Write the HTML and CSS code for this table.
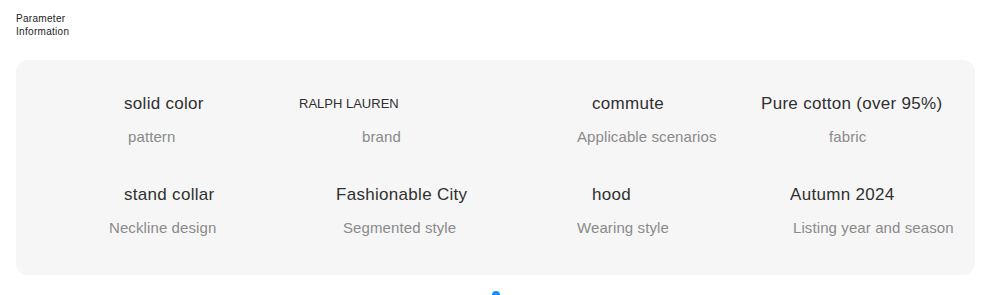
FILE: index.html
```html
<!DOCTYPE html>
<html lang="en">
<head>
<meta charset="utf-8">
<title>Parameter Information</title>
<link rel="stylesheet" href="styles.css">
</head>
<body>
  <div class="page">
    <h2 class="title">Parameter<br>Information</h2>
    <section class="card">
      <div class="grid">
        <div class="cell">
          <div class="value off-15">solid color</div>
          <div class="label off-19">pattern</div>
        </div>
        <div class="cell">
          <div class="value brand-value">RALPH LAUREN</div>
          <div class="label off-63">brand</div>
        </div>
        <div class="cell">
          <div class="value off-15">commute</div>
          <div class="label">Applicable scenarios</div>
        </div>
        <div class="cell">
          <div class="value">Pure cotton (over 95%)</div>
          <div class="label off-68">fabric</div>
        </div>

        <div class="cell">
          <div class="value off-15">stand collar</div>
          <div class="label">Neckline design</div>
        </div>
        <div class="cell">
          <div class="value off-37">Fashionable City</div>
          <div class="label off-44">Segmented style</div>
        </div>
        <div class="cell">
          <div class="value off-15">hood</div>
          <div class="label">Wearing style</div>
        </div>
        <div class="cell">
          <div class="value off-29">Autumn 2024</div>
          <div class="label off-32">Listing year and season</div>
        </div>
      </div>
    </section>
    <div class="dots"><span class="dot"></span></div>
  </div>
</body>
</html>
```

FILE: styles.css
```css
* { box-sizing: border-box; }
html, body {
  margin: 0;
  padding: 0;
  background: #ffffff;
}
body {
  font-family: "Liberation Sans", Arial, sans-serif;
  overflow: hidden;
}
.page {
  padding: 12px 6px 0 16px;
}
.title {
  margin: 0;
  font-size: 10px;
  line-height: 13px;
  font-weight: normal;
  letter-spacing: 0.3px;
  color: #222;
}
.card {
  margin-top: 22px;
  background: #f6f6f6;
  border-radius: 12px;
  height: 215px;
  padding: 33px 0 0 93px;
}
.grid {
  display: grid;
  grid-template-columns: 190px 278px 184px 1fr;
  row-gap: 37px;
}
.cell {
  display: flex;
  flex-direction: column;
  gap: 12px;
  white-space: nowrap;
}
.value {
  font-size: 17px;
  line-height: 22px;
  letter-spacing: 0.3px;
  color: #303030;
}
.brand-value {
  font-size: 13px;
  letter-spacing: 0;
}
.label {
  font-size: 15px;
  line-height: 20px;
  letter-spacing: 0.1px;
  color: #8a8a8a;
}
.off-15 { margin-left: 15px; }
.off-19 { margin-left: 19px; }
.off-29 { margin-left: 29px; }
.off-32 { margin-left: 32px; }
.off-37 { margin-left: 37px; }
.off-44 { margin-left: 44px; }
.off-63 { margin-left: 63px; }
.off-68 { margin-left: 68px; }
.dots {
  display: flex;
  justify-content: center;
  margin-top: 16px;
}
.dot {
  width: 8px;
  height: 8px;
  border-radius: 50%;
  background: #1890ff;
}
```
